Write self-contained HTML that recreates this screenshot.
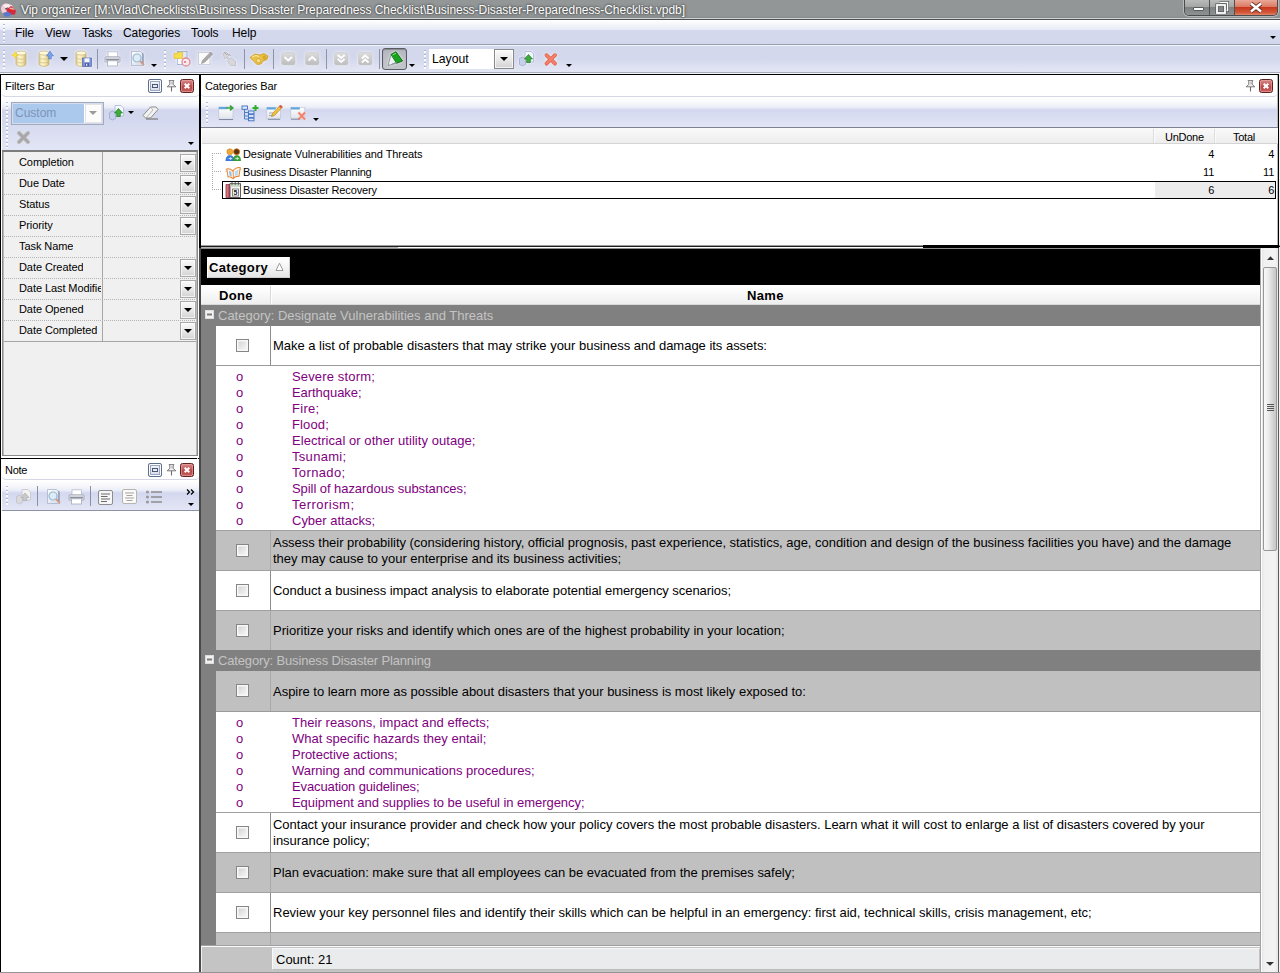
<!DOCTYPE html>
<html><head><meta charset="utf-8"><title>Vip organizer</title>
<style>
*{box-sizing:border-box;margin:0;padding:0}
html,body{width:1280px;height:973px;overflow:hidden;background:#d6dbf0;font-family:"Liberation Sans",sans-serif;font-size:11px;color:#000}
#app{position:relative;width:1280px;height:973px;overflow:hidden;background:#d6dbf0}
#app div,#app span,#app svg,#app i,#app b{position:absolute}
.t{white-space:nowrap;line-height:14px;height:14px;letter-spacing:-.25px}
.c{white-space:nowrap;font-size:13px;line-height:16px;height:17px;padding-top:1px}
.c.b{font-weight:bold;letter-spacing:.35px}
.p{color:#800080}
/* title */
#title{left:0;top:0;width:1280px;height:19px;background:linear-gradient(#939797 0,#919595 16px,#8a8e8f 17px,#8a8e8f 17.5px,#d0d4d4 18px,#d0d4d4 19px)}
#title .tt{left:21px;top:2px;font-size:12px;line-height:16px;color:#fff;white-space:nowrap;text-shadow:0 0 3px rgba(0,0,0,.6),0 0 2px rgba(0,0,0,.45);letter-spacing:-.045px}
#menubar{left:0;top:19px;width:1280px;height:27px;background:linear-gradient(#4c5050 0,#4c5050 1px,#ffffff 1px,#f6f7fc 5px,#eceef9 9px,#e7eaf7 11px,#d4d8ed 11px,#d3d7ec 25px,#9a9db0 25px,#9a9db0 26px,#f4f5fb 26px)}
#menubar .m{top:7px;font-size:12px;line-height:15px;white-space:nowrap;letter-spacing:-.1px}
#toolbar{left:0;top:46px;width:1280px;height:26px;background:linear-gradient(#d4d8ec 0,#d3d7ec 45%,#dadeef 70%,#e4e7f5 100%)}
.grip{width:2px;background:repeating-linear-gradient(#b4b9d2 0 1px,#fafbfe 1px 3px,rgba(255,255,255,0) 3px 4px)}
#toolbar svg{filter:drop-shadow(0 0 1.5px rgba(255,255,255,.75))}
.sep{width:1px;background:#8e93a8}
.arr{width:0;height:0;border-left:3px solid transparent;border-right:3px solid transparent;border-top:3px solid #000}
.arr4{width:0;height:0;border-left:4px solid transparent;border-right:4px solid transparent;border-top:4px solid #000}
.blk{background:#000}
.panel{background:#fff}
.hdr{background:#fff;border-bottom:1px solid #d5d8e4;border-radius:0 0 4px 4px}
.ptb{background:linear-gradient(#ffffff 0,#f5f6fb 6px,#e9ecf8 9.5px,#d3d7ee 12px,#d4d8ef 40%,#e3e6f5 100%)}
.btn{border:1px solid #a9a9a9;background:linear-gradient(#fafafa,#e9e9e9 50%,#d3d3d3);box-shadow:inset 0 0 0 1px rgba(255,255,255,.7)}
.cb{width:13px;height:13px;border:1px solid #868686;background:linear-gradient(135deg,#cdcdcd 0,#e6e6e6 50%,#fbfbfb 100%);box-shadow:inset 0 0 0 1.5px #f8f8f8}
.rowg{background:#c0c0c0}
.roww{background:#fff}
.grp{background:#808080;color:#c3c3c3}
.ln{background:#808080}
</style></head><body><div id="app">
<svg width="0" height="0" style="left:0;top:0"><defs><linearGradient id="cy" x1="0" x2="1" y1="0" y2="0"><stop offset="0" stop-color="#dccb8c"/><stop offset=".3" stop-color="#fcf6d6"/><stop offset=".65" stop-color="#f4e6ac"/><stop offset="1" stop-color="#c9b676"/></linearGradient><linearGradient id="gb" x1="0" x2="0" y1="0" y2="1"><stop offset="0" stop-color="#dcdcdc"/><stop offset="1" stop-color="#bdbdbd"/></linearGradient><linearGradient id="rd" x1="0" x2="0" y1="0" y2="1"><stop offset="0" stop-color="#d98a86"/><stop offset=".5" stop-color="#c24a46"/><stop offset="1" stop-color="#b43c38"/></linearGradient><linearGradient id="pg" x1="0" x2="1" y1="0" y2="1"><stop offset="0" stop-color="#ffffff"/><stop offset="1" stop-color="#cfd9ea"/></linearGradient></defs></svg>
<div id="title"><span class="tt">Vip organizer [M:\Vlad\Checklists\Business Disaster Preparedness Checklist\Business-Disaster-Preparedness-Checklist.vpdb]</span><svg style="left:0px;top:1px" width="18" height="17" viewBox="0 0 18 17"><path d="M1 8c0-4 3-6 6-5.500l5 1.500 1 4-7 3-4 1z" fill="#f1cdd8"/><path d="M3 4l5-1 3 2-4 3z" fill="#faf0f4"/><path d="M6 8.500l5-3.500 5 4.500-1 4-6 .5z" fill="#d62a3c"/><path d="M9 6.500l4 .5 2 2-5-1z" fill="#f4b49a"/><path d="M3 13l4-2.500 5 2.500-3 2.500-4 .3z" fill="#5878cf"/><path d="M5 8l3-1.200" stroke="#444" stroke-width="1"/></svg><div style="left:1184px;top:0;width:94px;height:16px;border:1px solid #4a4c4c;border-top:0;border-radius:0 0 5px 5px;overflow:hidden;box-shadow:0 0 0 1px rgba(255,255,255,.35)"><div style="left:0;top:0;width:25px;height:15px;background:linear-gradient(#b9bbbb,#a4a6a6 45%,#7f8282 50%,#8e9191);border-right:1px solid #4f5151"></div><div style="left:25px;top:0;width:25px;height:15px;background:linear-gradient(#b9bbbb,#a4a6a6 45%,#7f8282 50%,#8e9191);border-right:1px solid #4f5151"></div><div style="left:50px;top:0;width:43px;height:15px;background:linear-gradient(#e9a898,#dc7a64 45%,#c8391c 50%,#d4583a 85%,#e08a70)"></div><div style="left:8px;top:7px;width:11px;height:4px;background:#fff;border:1px solid #5a5c5c;border-radius:1px"></div><svg style="left:30px;top:1px" width="14" height="13" viewBox="0 0 14 13"><path d="M4.5 1.5h8v8h-2" fill="none" stroke="#555" stroke-width="3"/><path d="M4.500 1.5h8v8h-2" fill="none" stroke="#fff" stroke-width="1.6"/><rect x="2" y="4" width="8" height="8" fill="none" stroke="#555" stroke-width="3.2"/><rect x="2" y="4" width="8" height="8" fill="none" stroke="#fff" stroke-width="1.8"/></svg><svg style="left:64px;top:2px" width="14" height="11" viewBox="0 0 14 11"><path d="M2 1.500l10 8M12 1.500l-10 8" stroke="#5a2a22" stroke-width="4.200" /><path d="M2 1.500l10 8M12 1.500l-10 8" stroke="#fff" stroke-width="2.600"/></svg></div></div>
<div id="menubar"><div class="grip" style="left:3px;top:5px;height:18px"></div><span class="m" style="left:15px">File</span><span class="m" style="left:45px">View</span><span class="m" style="left:82px">Tasks</span><span class="m" style="left:123px">Categories</span><span class="m" style="left:191px">Tools</span><span class="m" style="left:232px">Help</span><i class="arr" style="left:1270px;top:17px"></i></div>
<div id="toolbar"><div class="grip" style="left:3px;top:4px;height:20px"></div><div style="left:0;top:-46px;width:0;height:0"><svg style="left:11px;top:50px" width="18" height="18" viewBox="0 0 18 18" ><g transform="translate(5,.5)"><path d="M0 2.500v11c0 1.400 2.200 2.300 5 2.300s5-.9 5-2.300v-11z" fill="url(#cy)" stroke="#bfab6c" stroke-width=".7"/><ellipse cx="5" cy="2.600" rx="5" ry="2" fill="#fdf8de" stroke="#c9b676" stroke-width=".7"/><path d="M0 6.500c0 1.400 2.200 2.200 5 2.200s5-.8 5-2.200M0 10.200c0 1.400 2.200 2.200 5 2.200s5-.8 5-2.200" fill="none" stroke="#d3c188" stroke-width=".8"/></g><path d="M4 1.500l1 2.500 2.500 1-2.500 1-1 2.500-1-2.500-2.500-1 2.500-1z" fill="#f8e24a" stroke="#e8c820" stroke-width=".5"/></svg><svg style="left:38px;top:50px" width="18" height="18" viewBox="0 0 18 18" ><g transform="translate(1,.5)"><path d="M0 2.500v11c0 1.400 2.200 2.300 5 2.300s5-.9 5-2.300v-11z" fill="url(#cy)" stroke="#bfab6c" stroke-width=".7"/><ellipse cx="5" cy="2.600" rx="5" ry="2" fill="#fdf8de" stroke="#c9b676" stroke-width=".7"/><path d="M0 6.500c0 1.400 2.200 2.200 5 2.200s5-.8 5-2.200M0 10.200c0 1.400 2.200 2.200 5 2.200s5-.8 5-2.200" fill="none" stroke="#d3c188" stroke-width=".8"/></g><path d="M12 1l3.500 5h-2.200v3h-2.600v-3h-2.200z" fill="#7aa4ea" stroke="#4a78c8" stroke-width=".6"/></svg><i class="arr4" style="left:60px;top:57px"></i><svg style="left:75px;top:50px" width="18" height="18" viewBox="0 0 18 18" ><g transform="translate(1,.5)"><path d="M0 2.500v11c0 1.400 2.200 2.300 5 2.300s5-.9 5-2.300v-11z" fill="url(#cy)" stroke="#bfab6c" stroke-width=".7"/><ellipse cx="5" cy="2.600" rx="5" ry="2" fill="#fdf8de" stroke="#c9b676" stroke-width=".7"/><path d="M0 6.500c0 1.400 2.200 2.200 5 2.200s5-.8 5-2.200M0 10.200c0 1.400 2.200 2.200 5 2.200s5-.8 5-2.200" fill="none" stroke="#d3c188" stroke-width=".8"/></g><rect x="7.500" y="8" width="9" height="8.500" fill="#7f92d4" stroke="#5568b0" stroke-width=".7"/><rect x="9.500" y="8.300" width="5" height="3.800" fill="#f4f6ff"/><rect x="10" y="13.200" width="4" height="3" fill="#4a5a9a"/><rect x="11" y="13.800" width="1.300" height="2" fill="#e8ecff"/></svg><div class="sep" style="left:97px;top:49px;height:20px"></div><svg style="left:104px;top:51px" width="17" height="16" viewBox="0 0 17 16" ><rect x="4" y=".8" width="9.500" height="5.500" fill="#fff" stroke="#b8bccb" stroke-width=".8"/><rect x="1" y="5.800" width="15" height="5.400" rx="1" fill="#e2e4ea" stroke="#9a9eae" stroke-width=".8"/><rect x="2" y="7.800" width="13" height="1.600" fill="#8d909c"/><rect x="3.500" y="9.800" width="10" height="5.200" fill="#fff" stroke="#a6aab8" stroke-width=".8"/></svg><svg style="left:129px;top:50px" width="18" height="18" viewBox="0 0 18 18" ><path d="M2.500 1.500h9l3 3v11h-12z" fill="url(#pg)" stroke="#a9b4c9" stroke-width=".8"/><circle cx="8" cy="8" r="4" fill="#d8ecf6" fill-opacity=".8" stroke="#9db8d2" stroke-width="1.200"/><path d="M11 11l4 4" stroke="#d79a7a" stroke-width="1.800"/><path d="M13.800 3v10" stroke="#7f8aa8" stroke-width="1"/></svg><i class="arr" style="left:151px;top:64px"></i><div class="grip" style="left:164px;top:50px;height:20px"></div><svg style="left:173px;top:50px" width="19" height="18" viewBox="0 0 19 18" ><rect x="4.500" y="1.500" width="9.500" height="13" fill="#dfe8f5" stroke="#94a9cc" stroke-width=".8"/><path d="M1 3.500h3l1-1.300h4.500v6.300h-8.500z" fill="#f7dc4e" stroke="#e0bf2a" stroke-width=".7"/><rect x="4.800" y="9" width="4" height="5" fill="#f8fbff"/><circle cx="13" cy="12" r="4" fill="#fbe9ec" stroke="#e08a98" stroke-width="1.300"/><path d="M13 12h-2" stroke="#c03048" stroke-width="1.200"/></svg><svg style="left:197px;top:50px" width="18" height="18" viewBox="0 0 18 18" ><rect x="1.500" y="2.500" width="11.500" height="12" fill="#fafafa" stroke="#c9ccd6" stroke-width=".9"/><path d="M4.500 13.500l1.200-3.300 8-8.200 2 2-8 8.200z" fill="#a9a9a9" stroke="#8f8f8f" stroke-width=".6"/></svg><svg style="left:221px;top:50px" width="18" height="18" viewBox="0 0 18 18" ><path d="M2 3.500l3-1.500 3 3-1.500 2 2 2 2-1 4 3.500v4h-5l-3-4.500 1-1.500-2-2-2 1z" fill="#d4d4d8" stroke="#b9b9c0" stroke-width=".7" fill-opacity=".9"/><path d="M3 2.500l2 1M5 5l2-1.500M8 4l1.500 2" stroke="#a4a4ac" stroke-width="1"/></svg><div class="sep" style="left:244px;top:49px;height:20px"></div><svg style="left:249px;top:52px" width="20" height="14" viewBox="0 0 20 14" ><path d="M1 5.500l5-3.500 5 1 4-1.500 4 2.500-1 3.500-4 1.500-2 3-4 .5-3-3z" fill="#e9c14a" stroke="#c79a22" stroke-width=".8"/><ellipse cx="9.500" cy="8.700" rx="2.300" ry="2" fill="#f7e08c" stroke="#c79a22" stroke-width=".6"/><ellipse cx="15.500" cy="5.500" rx="2" ry="2.300" fill="#d9a92e"/><path d="M3 5l4-1.500 3 1" stroke="#fbeaa0" stroke-width="1" fill="none"/></svg><div class="sep" style="left:273px;top:49px;height:20px"></div><svg style="left:281px;top:52px" width="15" height="14" viewBox="0 0 15 14" ><rect x=".5" y=".5" width="13.500" height="12.500" rx="2" fill="url(#gb)" stroke="#c9c9c9" stroke-width=".6"/><path d="M3.500 5l3.700 3.500L11 5" fill="none" stroke="#fff" stroke-width="1.800"/></svg><svg style="left:305px;top:52px" width="15" height="14" viewBox="0 0 15 14" ><rect x=".5" y=".5" width="13.500" height="12.500" rx="2" fill="url(#gb)" stroke="#c9c9c9" stroke-width=".6"/><path d="M3.500 8.500L7.200 5 11 8.500" fill="none" stroke="#fff" stroke-width="1.800"/></svg><div class="sep" style="left:326px;top:49px;height:20px"></div><svg style="left:334px;top:52px" width="15" height="14" viewBox="0 0 15 14" ><rect x=".5" y=".5" width="13.500" height="12.500" rx="2" fill="url(#gb)" stroke="#c9c9c9" stroke-width=".6"/><path d="M3.800 3l3.400 3L10.600 3M3.800 7l3.400 3 3.400-3" fill="none" stroke="#fff" stroke-width="1.800"/></svg><svg style="left:358px;top:52px" width="15" height="14" viewBox="0 0 15 14" ><rect x=".5" y=".5" width="13.500" height="12.500" rx="2" fill="url(#gb)" stroke="#c9c9c9" stroke-width=".6"/><path d="M3.800 6.500L7.200 3.500l3.400 3M3.800 10.500L7.200 7.500l3.400 3" fill="none" stroke="#fff" stroke-width="1.800"/></svg><div class="sep" style="left:379px;top:49px;height:20px"></div><div style="left:382px;top:48px;width:25px;height:22px;border:1px solid #595b60;border-radius:3px;background:linear-gradient(#b4b7bd,#c3c6cc);box-shadow:inset 0 1px 1px rgba(0,0,0,.25)"></div><svg style="left:386px;top:50px" width="18" height="18" viewBox="0 0 18 18" ><path d="M2 15.500l3-11 5-2.500 6.500 9-5.500 2z" fill="#eef2f2" stroke="#6d7d74" stroke-width=".7"/><path d="M5 4.500l5-2.700 6.500 9.200-6 2.200z" fill="#18a41c" stroke="#0c6a10" stroke-width=".8"/><path d="M6.500 5l3.500-1.800" stroke="#7fe07f" stroke-width="1"/><path d="M6 14l5-1.800" stroke="#7a8a9a" stroke-width=".8"/></svg><i class="arr" style="left:409px;top:64px"></i><div class="grip" style="left:424px;top:50px;height:20px"></div><div style="left:429px;top:49px;width:66px;height:20px;background:#fff"></div><span style="left:432px;top:51px;font-size:12.2px;line-height:16px;white-space:nowrap">Layout</span><div class="btn" style="left:494px;top:49px;width:20px;height:20px;border-color:#8a8a8a"></div><i class="arr4" style="left:500px;top:57px"></i><svg style="left:518px;top:50px" width="18" height="18" viewBox="0 0 18 18" ><path d="M7 1.500h6l2.500 2.500v8h-8.500z" fill="#f4f8ff" stroke="#a9b8d2" stroke-width=".8"/><path d="M1.500 8.500l3-1.500 3 1.500v6l-3 1.500-3-1.500z" fill="#c7d0ea" stroke="#98a3c8" stroke-width=".7"/><path d="M10.500 4.500l4 4.500h-2.200v3.500h-3.600v-3.500h-2.200z" fill="#3cae3c" stroke="#1e7a1e" stroke-width=".7"/></svg><svg style="left:543px;top:52px" width="16" height="15" viewBox="0 0 16 15" ><path d="M3.500 3.200l8.500 8.500M12 3.200l-8.500 8.500" stroke="#d8604c" stroke-width="3.800" stroke-linecap="round"/><path d="M3.500 3.200l8.500 8.500M12 3.200l-8.500 8.500" stroke="#f47e68" stroke-width="2.500" stroke-linecap="round"/></svg><i class="arr" style="left:566px;top:64px"></i></div></div>
<div style="left:0;top:72px;width:1280px;height:1px;background:#a9acba"></div><div style="left:0;top:73px;width:1280px;height:1px;background:#f6f7fb"></div><div class="blk" style="left:0;top:74px;width:1280px;height:1px"></div><div class="blk" style="left:0;top:74px;width:1px;height:899px"></div><div style="left:1px;top:75px;width:200px;height:898px;background:#fff"></div><div class="blk" style="left:199px;top:74px;width:2px;height:174px"></div><div style="left:199px;top:248px;width:2px;height:725px;background:#4a4a4a"></div><div class="blk" style="left:1278px;top:74px;width:1px;height:174px"></div><div style="left:1279px;top:74px;width:1px;height:899px;background:#f2f2f2"></div><div class="blk" style="left:0;top:458px;width:199px;height:1px"></div><div style="left:197px;top:76px;width:1px;height:896px;background:#d4d4d8"></div><div style="left:201px;top:245px;width:1079px;height:1px;background:#9c9c9c"></div><div style="left:201px;top:246px;width:1079px;height:1px;background:#1e1e1e"></div><div style="left:201px;top:247px;width:197px;height:1px;background:#b4b4b4"></div><div style="left:398px;top:247px;width:525px;height:1px;background:#fff"></div><div class="blk" style="left:923px;top:245px;width:356px;height:3px"></div><div class="panel" style="left:2px;top:75px;width:197px;height:383px"><div class="hdr" style="left:0;top:0;width:197px;height:22px"></div><span class="t" style="left:3px;top:4px;letter-spacing:-.05px">Filters Bar</span><div style="left:178px;top:4px;width:14px;height:14px;border:1px solid #5e2222;border-radius:2.5px;background:linear-gradient(#d48686,#c45c5c 45%,#b84848 55%,#c66060);box-shadow:inset 0 0 0 1px rgba(240,170,170,.55)"></div><svg style="left:181px;top:7px" width="8" height="8" viewBox="0 0 8 8" ><path d="M1.700 1.700l4.600 4.600M6.300 1.700l-4.600 4.600" stroke="#fff" stroke-width="2"/></svg><svg style="left:164px;top:5px" width="11" height="12" viewBox="0 0 11 12" ><path d="M3 .6h5l-.8 1.200v2.600l2.600 2.400h-8.600l2.600-2.400v-2.600z" fill="#f0f0f0" stroke="#6e6e6e" stroke-width=".9"/><path d="M5.500 7v4.500" stroke="#6e6e6e" stroke-width="1.100"/><path d="M6 2v2.500" stroke="#b0b0b0" stroke-width="1"/></svg><div style="left:146px;top:4px;width:14px;height:14px;border:1px solid #5e6f8e;border-radius:2px;background:linear-gradient(#f6f8fb,#d5dbe8);box-shadow:inset 0 0 0 1px #fbfcfe,inset 0 0 0 2px #9aa7bf"></div><div style="left:150px;top:9px;width:6px;height:4px;border:1px solid #4a5670;background:#e8ecf4"></div><div class="ptb" style="left:0;top:23px;width:197px;height:53px"></div><div class="grip" style="left:4px;top:27px;height:46px"></div><div style="left:9px;top:27px;width:93px;height:23px;border:1px solid #a3a9bd;background:#fff;box-shadow:inset 0 0 0 1px #d7dcec"></div><div style="left:11px;top:29px;width:71px;height:19px;background:#aac9ed"></div><span style="left:13px;top:30px;font-size:12px;line-height:16px;color:#7d94b5;white-space:nowrap">Custom</span><div style="left:83px;top:29px;width:17px;height:19px;background:#fcfcfc;border:1px solid #e3e3e3"></div><i class="arr4" style="left:87px;top:36px;border-top-color:#9a9a9a"></i><svg style="left:106px;top:29px" width="18" height="18" viewBox="0 0 18 18" ><path d="M7 1.500h6l2.500 2.500v8h-8.500z" fill="#f4f8ff" stroke="#a9b8d2" stroke-width=".8"/><path d="M1.500 8.500l3-1.500 3 1.500v6l-3 1.500-3-1.500z" fill="#c7d0ea" stroke="#98a3c8" stroke-width=".7"/><path d="M10.500 4.500l4 4.500h-2.200v3.500h-3.600v-3.500h-2.200z" fill="#3cae3c" stroke="#1e7a1e" stroke-width=".7"/></svg><i class="arr" style="left:126px;top:36px"></i><svg style="left:139px;top:30px" width="19" height="17" viewBox="0 0 19 17" ><path d="M2 10.500l7.500-8.500h5.500l2 2.500-7.500 8.500h-5z" fill="#f2f2f2" stroke="#8c8c8c" stroke-width="1"/><path d="M5 14h12" stroke="#7f7f7f" stroke-width="1.300"/><path d="M9.500 2l2.500 3-7 8" fill="none" stroke="#aaaaaa" stroke-width=".8"/></svg><svg style="left:14px;top:55px" width="15" height="15" viewBox="0 0 15 15" ><path d="M3 3l9 9M12 3l-9 9" stroke="#c4c4c4" stroke-width="4.200" stroke-linecap="round"/><path d="M3 3l9 9M12 3l-9 9" stroke="#a8a8a8" stroke-width="2.800" stroke-linecap="round"/></svg><i class="arr" style="left:186px;top:67px"></i><div style="left:0px;top:75px;width:196px;height:306px;background:#f0f0f0;border:1px solid #8a8a8a;border-top:2px solid #7c7c7c;box-shadow:inset 1px 0 0 #b9b9b9,inset -1px 0 0 #b9b9b9"></div><div style="left:2px;top:77px;width:192px;height:190px;border-bottom:1px solid #a6a6a6"></div><div style="left:100px;top:77px;width:1px;height:190px;background:#a6a6a6"></div><span class="t" style="left:17px;top:80px;max-width:82px;overflow:hidden;letter-spacing:-.08px">Completion</span><div class="btn" style="left:178px;top:79px;width:16px;height:18px"></div><i class="arr4" style="left:182px;top:86px"></i><div style="left:2px;top:98px;width:192px;height:1px;background:repeating-linear-gradient(90deg,#b4b4b4 0 1px,transparent 1px 2px)"></div><span class="t" style="left:17px;top:101px;max-width:82px;overflow:hidden;letter-spacing:-.08px">Due Date</span><div class="btn" style="left:178px;top:100px;width:16px;height:18px"></div><i class="arr4" style="left:182px;top:107px"></i><div style="left:2px;top:119px;width:192px;height:1px;background:repeating-linear-gradient(90deg,#b4b4b4 0 1px,transparent 1px 2px)"></div><span class="t" style="left:17px;top:122px;max-width:82px;overflow:hidden;letter-spacing:-.08px">Status</span><div class="btn" style="left:178px;top:121px;width:16px;height:18px"></div><i class="arr4" style="left:182px;top:128px"></i><div style="left:2px;top:140px;width:192px;height:1px;background:repeating-linear-gradient(90deg,#b4b4b4 0 1px,transparent 1px 2px)"></div><span class="t" style="left:17px;top:143px;max-width:82px;overflow:hidden;letter-spacing:-.08px">Priority</span><div class="btn" style="left:178px;top:142px;width:16px;height:18px"></div><i class="arr4" style="left:182px;top:149px"></i><div style="left:2px;top:161px;width:192px;height:1px;background:repeating-linear-gradient(90deg,#b4b4b4 0 1px,transparent 1px 2px)"></div><span class="t" style="left:17px;top:164px;max-width:82px;overflow:hidden;letter-spacing:-.08px">Task Name</span><div style="left:2px;top:182px;width:192px;height:1px;background:repeating-linear-gradient(90deg,#b4b4b4 0 1px,transparent 1px 2px)"></div><span class="t" style="left:17px;top:185px;max-width:82px;overflow:hidden;letter-spacing:-.08px">Date Created</span><div class="btn" style="left:178px;top:184px;width:16px;height:18px"></div><i class="arr4" style="left:182px;top:191px"></i><div style="left:2px;top:203px;width:192px;height:1px;background:repeating-linear-gradient(90deg,#b4b4b4 0 1px,transparent 1px 2px)"></div><span class="t" style="left:17px;top:206px;max-width:82px;overflow:hidden;letter-spacing:-.08px">Date Last Modifie</span><div class="btn" style="left:178px;top:205px;width:16px;height:18px"></div><i class="arr4" style="left:182px;top:212px"></i><div style="left:2px;top:224px;width:192px;height:1px;background:repeating-linear-gradient(90deg,#b4b4b4 0 1px,transparent 1px 2px)"></div><span class="t" style="left:17px;top:227px;max-width:82px;overflow:hidden;letter-spacing:-.08px">Date Opened</span><div class="btn" style="left:178px;top:226px;width:16px;height:18px"></div><i class="arr4" style="left:182px;top:233px"></i><div style="left:2px;top:245px;width:192px;height:1px;background:repeating-linear-gradient(90deg,#b4b4b4 0 1px,transparent 1px 2px)"></div><span class="t" style="left:17px;top:248px;max-width:82px;overflow:hidden;letter-spacing:-.08px">Date Completed</span><div class="btn" style="left:178px;top:247px;width:16px;height:18px"></div><i class="arr4" style="left:182px;top:254px"></i></div>
<div class="panel" style="left:2px;top:459px;width:197px;height:514px"><div class="hdr" style="left:0;top:0;width:197px;height:21px"></div><span class="t" style="left:3px;top:4px">Note</span><div style="left:178px;top:4px;width:14px;height:14px;border:1px solid #5e2222;border-radius:2.5px;background:linear-gradient(#d48686,#c45c5c 45%,#b84848 55%,#c66060);box-shadow:inset 0 0 0 1px rgba(240,170,170,.55)"></div><svg style="left:181px;top:7px" width="8" height="8" viewBox="0 0 8 8" ><path d="M1.700 1.700l4.600 4.600M6.300 1.700l-4.600 4.600" stroke="#fff" stroke-width="2"/></svg><svg style="left:164px;top:5px" width="11" height="12" viewBox="0 0 11 12" ><path d="M3 .6h5l-.8 1.200v2.600l2.600 2.400h-8.600l2.600-2.400v-2.600z" fill="#f0f0f0" stroke="#6e6e6e" stroke-width=".9"/><path d="M5.500 7v4.500" stroke="#6e6e6e" stroke-width="1.100"/><path d="M6 2v2.500" stroke="#b0b0b0" stroke-width="1"/></svg><div style="left:146px;top:4px;width:14px;height:14px;border:1px solid #5e6f8e;border-radius:2px;background:linear-gradient(#f6f8fb,#d5dbe8);box-shadow:inset 0 0 0 1px #fbfcfe,inset 0 0 0 2px #9aa7bf"></div><div style="left:150px;top:9px;width:6px;height:4px;border:1px solid #4a5670;background:#e8ecf4"></div><div class="ptb" style="left:0;top:22px;width:197px;height:29px"></div><div class="grip" style="left:4px;top:27px;height:20px"></div><svg style="left:13px;top:29px" width="18" height="18" viewBox="0 0 18 18" ><path d="M7 1.500h6l2.500 2.500v8h-8.500z" fill="#f2f2f2" stroke="#c4c4c8" stroke-width=".8"/><path d="M1.500 8.500l3-1.500 3 1.500v6l-3 1.500-3-1.500z" fill="#d9d9de" stroke="#bdbdc4" stroke-width=".7"/><path d="M10 5l4 4.500h-2.200v3h-3.600v-3h-2.200z" fill="#c9c9cc" stroke="#adadb2" stroke-width=".7"/></svg><div class="sep" style="left:35px;top:27px;height:20px;background:#8a8fa6"></div><svg style="left:43px;top:29px" width="18" height="18" viewBox="0 0 18 18" ><path d="M2.500 1.500h9l3 3v11h-12z" fill="url(#pg)" stroke="#a9b4c9" stroke-width=".8"/><circle cx="8" cy="8" r="4" fill="#d8ecf6" fill-opacity=".8" stroke="#9db8d2" stroke-width="1.200"/><path d="M11 11l4 4" stroke="#d79a7a" stroke-width="1.800"/><path d="M13.800 3v10" stroke="#7f8aa8" stroke-width="1"/></svg><svg style="left:66px;top:30px" width="17" height="16" viewBox="0 0 17 16" ><rect x="4" y=".8" width="9.500" height="5.500" fill="#fff" stroke="#b8bccb" stroke-width=".8"/><rect x="1" y="5.800" width="15" height="5.400" rx="1" fill="#e2e4ea" stroke="#9a9eae" stroke-width=".8"/><rect x="2" y="7.800" width="13" height="1.600" fill="#8d909c"/><rect x="3.500" y="9.800" width="10" height="5.200" fill="#fff" stroke="#a6aab8" stroke-width=".8"/></svg><div class="sep" style="left:88px;top:27px;height:20px;background:#8a8fa6"></div><svg style="left:96px;top:31px" width="16" height="16" viewBox="0 0 16 16" ><rect x=".5" y=".5" width="14" height="14" rx="1.500" fill="#f6f6f6" stroke="#8d8d8d" stroke-width="1"/><path d="M3 4h9M3 6.500h6.500M3 9h9M3 11.500h6" stroke="#6a6a6a" stroke-width="1"/></svg><svg style="left:120px;top:30px" width="16" height="16" viewBox="0 0 16 16" ><rect x=".5" y=".5" width="14" height="14" rx="1.500" fill="#fafafa" stroke="#b8b4ae" stroke-width="1"/><path d="M3 4h9M4.500 6.500h6M3 9h9M4.500 11.500h6" stroke="#a6a29c" stroke-width="1"/></svg><svg style="left:143px;top:30px" width="18" height="16" viewBox="0 0 18 16" ><circle cx="2.500" cy="3" r="1.600" fill="#9a9a9a"/><circle cx="2.500" cy="8" r="1.600" fill="#9a9a9a"/><circle cx="2.500" cy="13" r="1.600" fill="#9a9a9a"/><path d="M6 3h11M6 8h11M6 13h11" stroke="#8c8c8c" stroke-width="1.600"/></svg><svg style="left:184px;top:30px" width="9" height="6" viewBox="0 0 9 6" ><path d="M1 .5l2.500 2.500-2.500 2.500M5 .5l2.500 2.500-2.500 2.500" fill="none" stroke="#000" stroke-width="1.300"/></svg><i class="arr" style="left:186px;top:44px"></i><div style="left:0;top:51px;width:197px;height:1px;background:#8d92a3"></div></div>
<div class="panel" style="left:201px;top:75px;width:1077px;height:170px"><div style="left:1076px;top:0;width:1px;height:170px;background:#b9b9b9"></div><div class="hdr" style="left:0;top:0;width:1076px;height:22px"></div><span class="t" style="left:4px;top:4px;letter-spacing:-.1px">Categories Bar</span><div style="left:1058px;top:4px;width:14px;height:14px;border:1px solid #5e2222;border-radius:2.5px;background:linear-gradient(#d48686,#c45c5c 45%,#b84848 55%,#c66060);box-shadow:inset 0 0 0 1px rgba(240,170,170,.55)"></div><svg style="left:1061px;top:7px" width="8" height="8" viewBox="0 0 8 8" ><path d="M1.700 1.700l4.600 4.600M6.300 1.700l-4.600 4.600" stroke="#fff" stroke-width="2"/></svg><svg style="left:1044px;top:5px" width="11" height="12" viewBox="0 0 11 12" ><path d="M3 .6h5l-.8 1.200v2.600l2.600 2.400h-8.600l2.600-2.400v-2.600z" fill="#f0f0f0" stroke="#6e6e6e" stroke-width=".9"/><path d="M5.500 7v4.500" stroke="#6e6e6e" stroke-width="1.100"/><path d="M6 2v2.500" stroke="#b0b0b0" stroke-width="1"/></svg><div class="ptb" style="left:0;top:23px;width:1076px;height:30px"></div><div class="grip" style="left:5px;top:27px;height:22px"></div><svg style="left:16px;top:29px" width="19" height="17" viewBox="0 0 19 17" ><defs><linearGradient id="wg" x1="0" x2="0" y1="0" y2="1"><stop offset="0" stop-color="#ffffff"/><stop offset="1" stop-color="#dfe3ea"/></linearGradient></defs><rect x="1.800" y="3" width="14.200" height="12.300" fill="url(#wg)" stroke="#b9c2d4" stroke-width=".6"/><rect x="1.800" y="3" width="8.500" height="2.200" fill="#5ea6dc"/><path d="M9.500 4h5.500M13 1.600l2.600 2.400-2.600 2.400" fill="none" stroke="#38a038" stroke-width="1.700"/><path d="M2 15.500h14" stroke="#7f8ba5" stroke-width="1.100"/></svg><svg style="left:40px;top:29px" width="19" height="18" viewBox="0 0 19 18" ><path d="M3.500 5v10M3.500 8.500h4M3.500 12h4M3.500 15h4" stroke="#4f7fc8" stroke-width="1" fill="none"/><rect x="1" y="2" width="5.500" height="3.300" fill="#dbe8fa" stroke="#3f6fc0" stroke-width=".9"/><rect x="7.500" y="7" width="5.500" height="2.800" fill="#dbe8fa" stroke="#3f6fc0" stroke-width=".9"/><rect x="7.500" y="10.600" width="5.500" height="2.800" fill="#dbe8fa" stroke="#3f6fc0" stroke-width=".9"/><rect x="7.500" y="14.200" width="5.500" height="2.600" fill="#dbe8fa" stroke="#3f6fc0" stroke-width=".9"/><path d="M14.500 1v6M11.500 4h6" stroke="#2fae2f" stroke-width="2"/></svg><svg style="left:64px;top:28px" width="19" height="18" viewBox="0 0 19 18" ><rect x="1.800" y="4.300" width="13.500" height="11.700" fill="url(#wg)" stroke="#b9c2d4" stroke-width=".6"/><rect x="1.800" y="4.300" width="9" height="2.200" fill="#5ea6dc"/><path d="M4 10h6M4 12.500h5" stroke="#9aa4b8" stroke-width=".9"/><path d="M6.500 13.500l1-3 8-8.500 2 2-8 8.500z" fill="#f0c23c" stroke="#b8862a" stroke-width=".7"/><path d="M14 3.500l2 2 1.500-1.500-2-2z" fill="#e0504a"/><path d="M3 16.300h12" stroke="#7f8ba5" stroke-width="1"/></svg><svg style="left:88px;top:29px" width="19" height="18" viewBox="0 0 19 18" ><rect x="1.800" y="3.300" width="14" height="11.700" fill="url(#wg)" stroke="#b9c2d4" stroke-width=".6"/><rect x="1.800" y="3.300" width="9" height="2.200" fill="#5ea6dc"/><path d="M9.500 8.500l6.500 7M16 8.500l-6.500 7" stroke="#f6c0b4" stroke-width="2.800"/><path d="M9.500 8.500l6.500 7M16 8.500l-6.500 7" stroke="#ee7a64" stroke-width="1.500"/><path d="M2 15.200h8.500" stroke="#7f8ba5" stroke-width="1"/></svg><i class="arr" style="left:112px;top:43px"></i><div style="left:0;top:52px;width:1077px;height:1px;background:#7d8292"></div><div style="left:1px;top:53px;width:1076px;height:16px;background:linear-gradient(#fafafa,#ededed);border-bottom:1px solid #d4d4d4"></div><div style="left:953px;top:54px;width:1px;height:14px;background:#fbfbfb;box-shadow:-1px 0 0 #dcdcdc"></div><div style="left:1014px;top:54px;width:1px;height:14px;background:#fbfbfb;box-shadow:-1px 0 0 #dcdcdc"></div><span class="t" style="left:964px;top:55px">UnDone</span><span class="t" style="left:1032px;top:55px">Total</span><div style="left:11px;top:78px;width:1px;height:37px;background:repeating-linear-gradient(180deg,#a8a8a8 0 1px,transparent 1px 2px)"></div><div style="left:11px;top:78px;width:10px;height:1px;background:repeating-linear-gradient(90deg,#a8a8a8 0 1px,transparent 1px 2px)"></div><span class="t" style="left:42px;top:72px;letter-spacing:-0.075px">Designate Vulnerabilities and Threats</span><span class="t" style="left:954px;width:59px;text-align:right;top:72px">4</span><span class="t" style="left:1014px;width:59px;text-align:right;top:72px">4</span><div style="left:11px;top:96px;width:10px;height:1px;background:repeating-linear-gradient(90deg,#a8a8a8 0 1px,transparent 1px 2px)"></div><span class="t" style="left:42px;top:90px;letter-spacing:-0.21px">Business Disaster Planning</span><span class="t" style="left:954px;width:59px;text-align:right;top:90px">11</span><span class="t" style="left:1014px;width:59px;text-align:right;top:90px">11</span><div style="left:11px;top:114px;width:10px;height:1px;background:repeating-linear-gradient(90deg,#a8a8a8 0 1px,transparent 1px 2px)"></div><div style="left:954px;top:106px;width:121px;height:18px;background:#ececec"></div><div style="left:21px;top:106px;width:1054px;height:18px;border:1px solid #000"></div><span class="t" style="left:42px;top:108px;letter-spacing:-0.14px">Business Disaster Recovery</span><span class="t" style="left:954px;width:59px;text-align:right;top:108px">6</span><span class="t" style="left:1014px;width:59px;text-align:right;top:108px">6</span><svg style="left:23.5px;top:72.5px" width="16.5" height="13.5" viewBox="0 0 19 16" ><circle cx="5.500" cy="4.500" r="3.600" fill="#f0a830" stroke="#c87f18" stroke-width=".6"/><path d="M.8 15.500c0-5 2-6.500 4.700-6.500s4.700 1.500 4.700 6.500z" fill="#3f7fe0" stroke="#2a58b0" stroke-width=".6"/><circle cx="13.500" cy="4.500" r="3.600" fill="#5a3412" stroke="#d87a18" stroke-width="1"/><path d="M9.500 15.500c0-5 1.600-6.500 4.200-6.500s4.500 1.500 4.500 6.500z" fill="#3aa83a" stroke="#1f7a1f" stroke-width=".6"/><path d="M4 12.500h3.500l-1.500-1.500M7.500 12.500l-1.500 1.500" stroke="#fff" stroke-width=".9" fill="none"/><path d="M12 12.500h3.500l-1.500-1.500M15.500 12.500l-1.500 1.500" stroke="#fff" stroke-width=".9" fill="none"/></svg><svg style="left:23.5px;top:91px" width="17" height="13.5" viewBox="0 0 19 16" ><path d="M1.500 3.500c2.500-.8 5 .2 7.500 2.500 2-3 5-4.500 8.500-4l-1.500 10c-3 0-5.500 1-7 3-2-1.800-4-2.500-6-2z" fill="#fdf6ee" stroke="#e8853a" stroke-width="1.200"/><path d="M9 6l.5 8.500" stroke="#e8853a" stroke-width="1"/><path d="M4 5.500l1 6 2.500.8-.7-5.500z" fill="#8fc0e8"/><path d="M11 6.500l4.500-2.500-1 6.500-3.500 1.500z" fill="#b8dcf4"/><path d="M1 4l-.3 3M17.800 3l.5 2" stroke="#f0a060" stroke-width="1"/></svg><svg style="left:23px;top:106px" width="19" height="18" viewBox="0 0 19 18" ><path d="M2 3.500h4v13h-4z" fill="#c05868" stroke="#8a3040" stroke-width=".8"/><path d="M3.200 3.500v13" stroke="#e08a8a" stroke-width=".9"/><path d="M6 2.500h10.500v14h-10.500z" fill="#f4f4f4" stroke="#4a4a4a" stroke-width=".9"/><path d="M6.500 2.800h9.500v3h-9.500z" fill="#c9d4c4"/><path d="M8 1v3M11.200 1v3M14.300 1v3" stroke="#5a5a5a" stroke-width="1"/><rect x="8.500" y="8" width="6" height="7" fill="#fff" stroke="#6a6a6a" stroke-width=".8"/><text x="11.500" y="14" font-size="7" font-weight="bold" text-anchor="middle" font-family="Liberation Sans,sans-serif" fill="#222">5</text></svg></div>
<div style="left:201px;top:248px;width:1079px;height:725px;background:#f0f0f0"><div class="blk" style="left:0;top:0;width:1060px;height:37px"></div><div style="left:0;top:0;width:1060px;height:1px;background:#8c8c8c"></div><div style="left:6px;top:9px;width:83px;height:21px;background:linear-gradient(#ffffff,#f4f4f4 50%,#e4e4e4);border:1px solid #fff;border-right-color:#cfcfcf;border-bottom-color:#cfcfcf"></div><span class="c b" style="left:8px;top:11px">Category</span><svg style="left:74px;top:14px" width="9" height="10" viewBox="0 0 9 10"><path d="M4.500 1.200L8 8.500H1z" fill="#fff" stroke="#9a9a9a" stroke-width="1"/></svg><div style="left:0;top:37px;width:1060px;height:20px;background:linear-gradient(#ffffff,#fafafa 40%,#eeeeee);border-bottom:1px solid #d9d9d9"></div><div style="left:69px;top:38px;width:1px;height:18px;background:#dadada;box-shadow:1px 0 0 #fff"></div><span class="c b" style="left:18px;top:39px">Done</span><span class="c b" style="left:546px;top:39px">Name</span><div style="left:0;top:57px;width:1060px;height:642px;background:#808080;overflow:hidden"><div class="grp" style="left:0;top:0px;width:1060px;height:21px"></div><svg style="left:4px;top:5px" width="9" height="9" viewBox="0 0 9 9"><rect x=".5" y=".5" width="8" height="8" fill="#f2f2f2" stroke="#dcdcdc"/><rect x="2" y="3.500" width="5" height="2" fill="#7a7a7a"/></svg><span class="c" style="left:17px;top:2px;color:#c4c4c4;letter-spacing:0px">Category: Designate Vulnerabilities and Threats</span><div style="left:15px;top:21px;width:1045px;height:39px;background:#fff"></div><div style="left:69px;top:21px;width:1px;height:39px;background:#8c8c8c"></div><div class="cb" style="left:35px;top:34px"></div><span class="c" style="left:72px;top:32px;letter-spacing:-0.02px">Make a list of probable disasters that may strike your business and damage its assets:</span><div style="left:15px;top:60px;width:1045px;height:165px;background:#fff;border-top:1px solid #9a9a9a"></div><span class="c p" style="left:35px;top:63px">o</span><span class="c p" style="left:91px;top:63px;letter-spacing:0.152px">Severe storm;</span><span class="c p" style="left:35px;top:79px">o</span><span class="c p" style="left:91px;top:79px;letter-spacing:-0.055px">Earthquake;</span><span class="c p" style="left:35px;top:95px">o</span><span class="c p" style="left:91px;top:95px;letter-spacing:0.3px">Fire;</span><span class="c p" style="left:35px;top:111px">o</span><span class="c p" style="left:91px;top:111px;letter-spacing:0.143px">Flood;</span><span class="c p" style="left:35px;top:127px">o</span><span class="c p" style="left:91px;top:127px;letter-spacing:0.061px">Electrical or other utility outage;</span><span class="c p" style="left:35px;top:143px">o</span><span class="c p" style="left:91px;top:143px;letter-spacing:0.309px">Tsunami;</span><span class="c p" style="left:35px;top:159px">o</span><span class="c p" style="left:91px;top:159px;letter-spacing:0.363px">Tornado;</span><span class="c p" style="left:35px;top:175px">o</span><span class="c p" style="left:91px;top:175px;letter-spacing:-0.061px">Spill of hazardous substances;</span><span class="c p" style="left:35px;top:191px">o</span><span class="c p" style="left:91px;top:191px;letter-spacing:0.472px">Terrorism;</span><span class="c p" style="left:35px;top:207px">o</span><span class="c p" style="left:91px;top:207px;letter-spacing:-0.007px">Cyber attacks;</span><div style="left:15px;top:225px;width:1045px;height:1px;background:#a0a0a0"></div><div style="left:15px;top:226px;width:1045px;height:39px;background:#c0c0c0"></div><div style="left:69px;top:226px;width:1px;height:39px;background:#a9a9a9"></div><div class="cb" style="left:35px;top:239px"></div><span class="c" style="left:72px;top:229px;letter-spacing:-0.03px">Assess their probability (considering history, official prognosis, past experience, statistics, age, condition and design of the business facilities you have) and the damage</span><span class="c" style="left:72px;top:245px;letter-spacing:-0.028px">they may cause to your enterprise and its business activities;</span><div style="left:15px;top:265px;width:1045px;height:1px;background:#a0a0a0"></div><div style="left:15px;top:266px;width:1045px;height:39px;background:#fff"></div><div style="left:69px;top:266px;width:1px;height:39px;background:#8c8c8c"></div><div class="cb" style="left:35px;top:279px"></div><span class="c" style="left:72px;top:277px;letter-spacing:-0.057px">Conduct a business impact analysis to elaborate potential emergency scenarios;</span><div style="left:15px;top:305px;width:1045px;height:1px;background:#a0a0a0"></div><div style="left:15px;top:306px;width:1045px;height:39px;background:#c0c0c0"></div><div style="left:69px;top:306px;width:1px;height:39px;background:#a9a9a9"></div><div class="cb" style="left:35px;top:319px"></div><span class="c" style="left:72px;top:317px;letter-spacing:0.017px">Prioritize your risks and identify which ones are of the highest probability in your location;</span><div class="grp" style="left:0;top:345px;width:1060px;height:21px"></div><svg style="left:4px;top:350px" width="9" height="9" viewBox="0 0 9 9"><rect x=".5" y=".5" width="8" height="8" fill="#f2f2f2" stroke="#dcdcdc"/><rect x="2" y="3.500" width="5" height="2" fill="#7a7a7a"/></svg><span class="c" style="left:17px;top:347px;color:#c4c4c4;letter-spacing:-0.15px">Category: Business Disaster Planning</span><div style="left:15px;top:366px;width:1045px;height:40px;background:#c0c0c0"></div><div style="left:69px;top:366px;width:1px;height:40px;background:#a9a9a9"></div><div class="cb" style="left:35px;top:379px"></div><span class="c" style="left:72px;top:378px;letter-spacing:-0.019px">Aspire to learn more as possible about disasters that your business is most likely exposed to:</span><div style="left:15px;top:406px;width:1045px;height:101px;background:#fff;border-top:1px solid #9a9a9a"></div><span class="c p" style="left:35px;top:409px">o</span><span class="c p" style="left:91px;top:409px;letter-spacing:0.057px">Their reasons, impact and effects;</span><span class="c p" style="left:35px;top:425px">o</span><span class="c p" style="left:91px;top:425px;letter-spacing:0.019px">What specific hazards they entail;</span><span class="c p" style="left:35px;top:441px">o</span><span class="c p" style="left:91px;top:441px;letter-spacing:-0.038px">Protective actions;</span><span class="c p" style="left:35px;top:457px">o</span><span class="c p" style="left:91px;top:457px;letter-spacing:-0.014px">Warning and communications procedures;</span><span class="c p" style="left:35px;top:473px">o</span><span class="c p" style="left:91px;top:473px;letter-spacing:-0.118px">Evacuation guidelines;</span><span class="c p" style="left:35px;top:489px">o</span><span class="c p" style="left:91px;top:489px;letter-spacing:-0.048px">Equipment and supplies to be useful in emergency;</span><div style="left:15px;top:507px;width:1045px;height:1px;background:#a0a0a0"></div><div style="left:15px;top:508px;width:1045px;height:39px;background:#fff"></div><div style="left:69px;top:508px;width:1px;height:39px;background:#8c8c8c"></div><div class="cb" style="left:35px;top:521px"></div><span class="c" style="left:72px;top:511px;letter-spacing:-0.017px">Contact your insurance provider and check how your policy covers the most probable disasters. Learn what it will cost to enlarge a list of disasters covered by your</span><span class="c" style="left:72px;top:527px">insurance policy;</span><div style="left:15px;top:547px;width:1045px;height:1px;background:#a0a0a0"></div><div style="left:15px;top:548px;width:1045px;height:39px;background:#c0c0c0"></div><div style="left:69px;top:548px;width:1px;height:39px;background:#a9a9a9"></div><div class="cb" style="left:35px;top:561px"></div><span class="c" style="left:72px;top:559px;letter-spacing:-0.024px">Plan evacuation: make sure that all employees can be evacuated from the premises safely;</span><div style="left:15px;top:587px;width:1045px;height:1px;background:#a0a0a0"></div><div style="left:15px;top:588px;width:1045px;height:39px;background:#fff"></div><div style="left:69px;top:588px;width:1px;height:39px;background:#8c8c8c"></div><div class="cb" style="left:35px;top:601px"></div><span class="c" style="left:72px;top:599px">Review your key personnel files and identify their skills which can be helpful in an emergency: first aid, technical skills, crisis management, etc;</span><div style="left:15px;top:627px;width:1045px;height:1px;background:#a0a0a0"></div><div style="left:15px;top:628px;width:1045px;height:20px;background:#c0c0c0"></div><div style="left:69px;top:628px;width:1px;height:20px;background:#a9a9a9"></div></div><div style="left:0;top:697px;width:1060px;height:28px;background:#c4c4c4;border-top:1px solid #a0a0a0"></div><div style="left:0;top:698px;width:1060px;height:1px;background:#fafafa"></div><div style="left:0;top:698px;width:1px;height:26px;background:#f0f0f0"></div><div style="left:71px;top:700px;width:988px;height:22px;background:#e9ebec;border:1px solid #f8f8f8;border-right-color:#c4c4c4;border-bottom-color:#bdbdbd"></div><span class="c" style="left:75px;top:703px">Count: 21</span><div style="left:-201px;top:724px;width:1280px;height:1px;background:#959595"></div><div style="left:1060px;top:0;width:17px;height:724px;background:linear-gradient(90deg,#e3e3e3,#f0f0f0 20%,#f3f3f3 80%,#e6e6e6)"></div><div style="left:1077px;top:0;width:1px;height:724px;background:#5c5c5c"></div><div style="left:1078px;top:0;width:1px;height:724px;background:#f2f2f2"></div><div style="left:1059px;top:0;width:1px;height:724px;background:#a2a2a2"></div><div style="left:1060px;top:0;width:1px;height:724px;background:#fdfdfd"></div><svg style="left:1066px;top:8px" width="7" height="4" viewBox="0 0 7 4"><path d="M0 4L3.500 .3 7 4z" fill="#333"/></svg><svg style="left:1065px;top:714px" width="8" height="4" viewBox="0 0 8 4"><path d="M0 0L4 3.800 8 0z" fill="#333"/></svg><div style="left:1062px;top:19px;width:14px;height:284px;border:1px solid #979797;border-radius:2px;background:linear-gradient(90deg,#f8f8f8,#ededed 35%,#d6d6d6 70%,#c6c6c6)"></div><div style="left:1066px;top:156px;width:7px;height:1px;background:#555"></div><div style="left:1066px;top:158px;width:7px;height:1px;background:#555"></div><div style="left:1066px;top:160px;width:7px;height:1px;background:#555"></div><div style="left:1066px;top:162px;width:7px;height:1px;background:#555"></div></div>
</div></body></html>
